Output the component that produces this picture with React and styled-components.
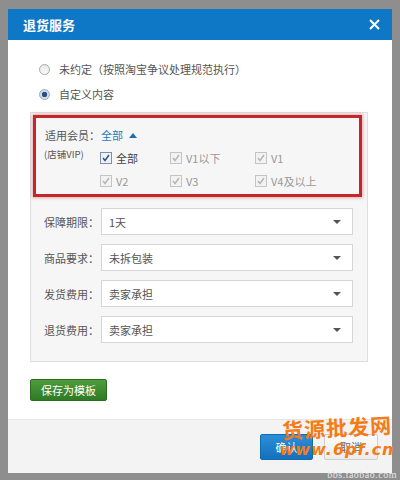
import styled, { createGlobalStyle } from 'styled-components'
import React from 'react'

const GlobalStyle = createGlobalStyle`
  html, body {
    margin: 0;
    padding: 0;
    background: #8e8e8e;
  }
  body {
    font-family: "Noto Sans CJK SC", "Liberation Sans", sans-serif;
  }
  * {
    box-sizing: border-box;
  }
`

const Frame = styled.div`
  width: 400px;
  height: 480px;
  padding: 9px 8px 7px 8px;
  position: relative;
  overflow: hidden;
`

const Dialog = styled.div`
  width: 384px;
  height: 464px;
  background: #fff;
  display: flex;
  flex-direction: column;
`

const Header = styled.div`
  height: 31px;
  background: #0e78c6;
  display: flex;
  align-items: center;
  justify-content: space-between;
  padding: 0 12px 0 15px;
  color: #fff;
`

const Title = styled.div`
  font-size: 13px;
  font-weight: bold;
`

const Body = styled.div`
  flex: 1;
  padding: 19px 24px 0 22px;
  display: flex;
  flex-direction: column;
`

const RadioRow = styled.label`
  display: flex;
  align-items: center;
  height: 20px;
  margin-bottom: 5px;
  font-size: 11px;
  color: #555;
  padding-left: 2px;
`

const RadioDot = styled.span`
  width: 11px;
  height: 11px;
  border-radius: 50%;
  border: 1px solid #a9a9a9;
  background: ${p => p.checked ? 'radial-gradient(circle, #2c4f86 0 2.5px, #cfdcee 3px)' : 'linear-gradient(#e6e6e6, #fafafa)'};
  margin: 0 9px 0 7px;
`

const Panel = styled.div`
  margin-top: 3px;
  background: #f6f6f6;
  border: 1px solid #dedede;
  padding: 2px 5px 18px 2px;
  display: flex;
  flex-direction: column;
`

const Highlight = styled.div`
  border: 3px solid #c4262b;
  box-shadow: 0 0 3px 1px rgba(196, 38, 43, 0.35);
  height: 82px;
  display: grid;
  grid-template-columns: 56px 1fr;
  padding: 9px 0 0 9px;
`

const MemberLabel = styled.div`
  font-size: 11px;
  color: #555;
  line-height: 16px;
`

const Small = styled.div`
  font-size: 9.5px;
  margin-top: 3px;
  margin-left: -1px;
`

const MemberRight = styled.div`
  display: flex;
  flex-direction: column;
`

const AllLink = styled.div`
  font-size: 11px;
  color: #1d7cbd;
  line-height: 16px;
  display: flex;
  align-items: center;
  gap: 6px;
`

const UpArrow = styled.span`
  width: 0;
  height: 0;
  border-left: 4px solid transparent;
  border-right: 4px solid transparent;
  border-bottom: 5px solid #1d6fa8;
`

const CheckGrid = styled.div`
  display: grid;
  grid-template-columns: 70px 85px 80px;
  row-gap: 10px;
  margin-top: 8px;
  margin-left: -1px;
`

const CheckItem = styled.div`
  display: flex;
  align-items: center;
  font-size: 11px;
  height: 13px;
  color: ${p => p.active ? '#444' : '#999'};
`

const Box = styled.span`
  width: 12px;
  height: 12px;
  border: 1px solid ${p => p.active ? '#7f8ea8' : '#c4c4c4'};
  background: ${p => p.active ? '#eef2f8' : '#f2f2f2'};
  margin-right: 4px;
  display: flex;
  align-items: center;
  justify-content: center;
`

const SelectRow = styled.div`
  display: flex;
  align-items: center;
  margin-top: ${p => p.first ? '11px' : '9px'};
`

const SelectLabel = styled.div`
  width: 68px;
  text-align: right;
  font-size: 11px;
  color: #555;
  padding-right: 2px;
`

const Select = styled.div`
  width: 252px;
  height: 27px;
  background: #fff;
  border: 1px solid #d6d6d6;
  display: flex;
  align-items: center;
  justify-content: space-between;
  padding: 0 11px 0 7px;
  font-size: 11px;
  color: #555;
`

const DownArrow = styled.span`
  width: 0;
  height: 0;
  border-left: 4px solid transparent;
  border-right: 4px solid transparent;
  border-top: 4px solid #555;
`

const SaveButton = styled.button`
  margin-top: 17px;
  width: 77px;
  height: 22px;
  border: 1px solid #2a6b1f;
  border-radius: 2px;
  background: linear-gradient(#4f9c3e, #2f7a24);
  color: #fff;
  font-family: inherit;
  font-size: 11px;
  padding: 0;
`

const Footer = styled.div`
  height: 54px;
  background: #f3f3f3;
  border-top: 1px solid #e6e6e6;
  display: flex;
  justify-content: flex-end;
  align-items: center;
  padding-right: 14px;
  gap: 11px;
`

const FooterButton = styled.button`
  width: ${p => p.primary ? '53px' : '54px'};
  height: 26px;
  border-radius: 2px;
  border: 1px solid ${p => p.primary ? '#106bb0' : '#cfcfcf'};
  background: ${p => p.primary ? 'linear-gradient(#2c8ed9, #1470bd)' : 'linear-gradient(#fbfbfb, #ececec)'};
  color: ${p => p.primary ? '#fff' : '#666'};
  font-family: inherit;
  font-size: 11px;
  padding: 0;
`

const Watermark = styled.div`
  position: absolute;
  right: 8px;
  top: 414px;
  width: 110px;
  display: flex;
  flex-direction: column;
  align-items: center;
  color: #f47b16;
  pointer-events: none;
`

const WaterTitle = styled.div`
  font-size: 21px;
  font-weight: bold;
  letter-spacing: 1px;
  line-height: 26px;
  transform: rotate(-3deg);
`

const WaterUrl = styled.div`
  font-family: "DejaVu Sans", sans-serif;
  font-style: italic;
  font-size: 16px;
  font-weight: bold;
  letter-spacing: 1px;
  line-height: 20px;
`

const WaterSite = styled.div`
  position: absolute;
  right: 3px;
  bottom: 0;
  font-family: "Liberation Serif", serif;
  font-size: 10px;
  line-height: 10px;
  color: #e8e8e8;
  letter-spacing: 0.5px;
`

function Tick({ active }) {
  return (
    <svg width="8" height="8" viewBox="0 0 8 8">
      <path d="M1 4 L3 6.5 L7 1" fill="none" stroke={active ? '#2d4f8c' : '#b5b5b5'} strokeWidth="1.4" />
    </svg>
  )
}

function Check({ label, active }) {
  return (
    <CheckItem active={active}>
      <Box active={active}><Tick active={active} /></Box>
      {label}
    </CheckItem>
  )
}

const members = [
  { label: '全部', active: true },
  { label: 'V1以下' },
  { label: 'V1' },
  { label: 'V2' },
  { label: 'V3' },
  { label: 'V4及以上' },
]

const selects = [
  ['保障期限：', '1天'],
  ['商品要求：', '未拆包装'],
  ['发货费用：', '卖家承担'],
  ['退货费用：', '卖家承担'],
]

function App() {
  return (
    <Frame>
      <GlobalStyle />
      <Dialog>
        <Header>
          <Title>退货服务</Title>
          <svg width="11" height="11" viewBox="0 0 11 11">
            <path d="M1 1 L10 10 M10 1 L1 10" stroke="#fff" strokeWidth="2" />
          </svg>
        </Header>
        <Body>
          <RadioRow><RadioDot />未约定（按照淘宝争议处理规范执行）</RadioRow>
          <RadioRow><RadioDot checked />自定义内容</RadioRow>
          <Panel>
            <Highlight>
              <MemberLabel>
                适用会员：
                <Small>(店铺VIP)</Small>
              </MemberLabel>
              <MemberRight>
                <AllLink>全部 <UpArrow /></AllLink>
                <CheckGrid>
                  {members.map((m, i) => <Check key={i} label={m.label} active={m.active} />)}
                </CheckGrid>
              </MemberRight>
            </Highlight>
            {selects.map(([label, value], i) => (
              <SelectRow key={i} first={i === 0}>
                <SelectLabel>{label}</SelectLabel>
                <Select>{value}<DownArrow /></Select>
              </SelectRow>
            ))}
          </Panel>
          <div>
            <SaveButton>保存为模板</SaveButton>
          </div>
        </Body>
        <Footer>
          <FooterButton primary>确认</FooterButton>
          <FooterButton>取消</FooterButton>
        </Footer>
      </Dialog>
      <Watermark>
        <WaterTitle>货源批发网</WaterTitle>
        <WaterUrl>www.6pf.cn</WaterUrl>
      </Watermark>
      <WaterSite>bbs.taobao.com</WaterSite>
    </Frame>
  )
}

export default App
